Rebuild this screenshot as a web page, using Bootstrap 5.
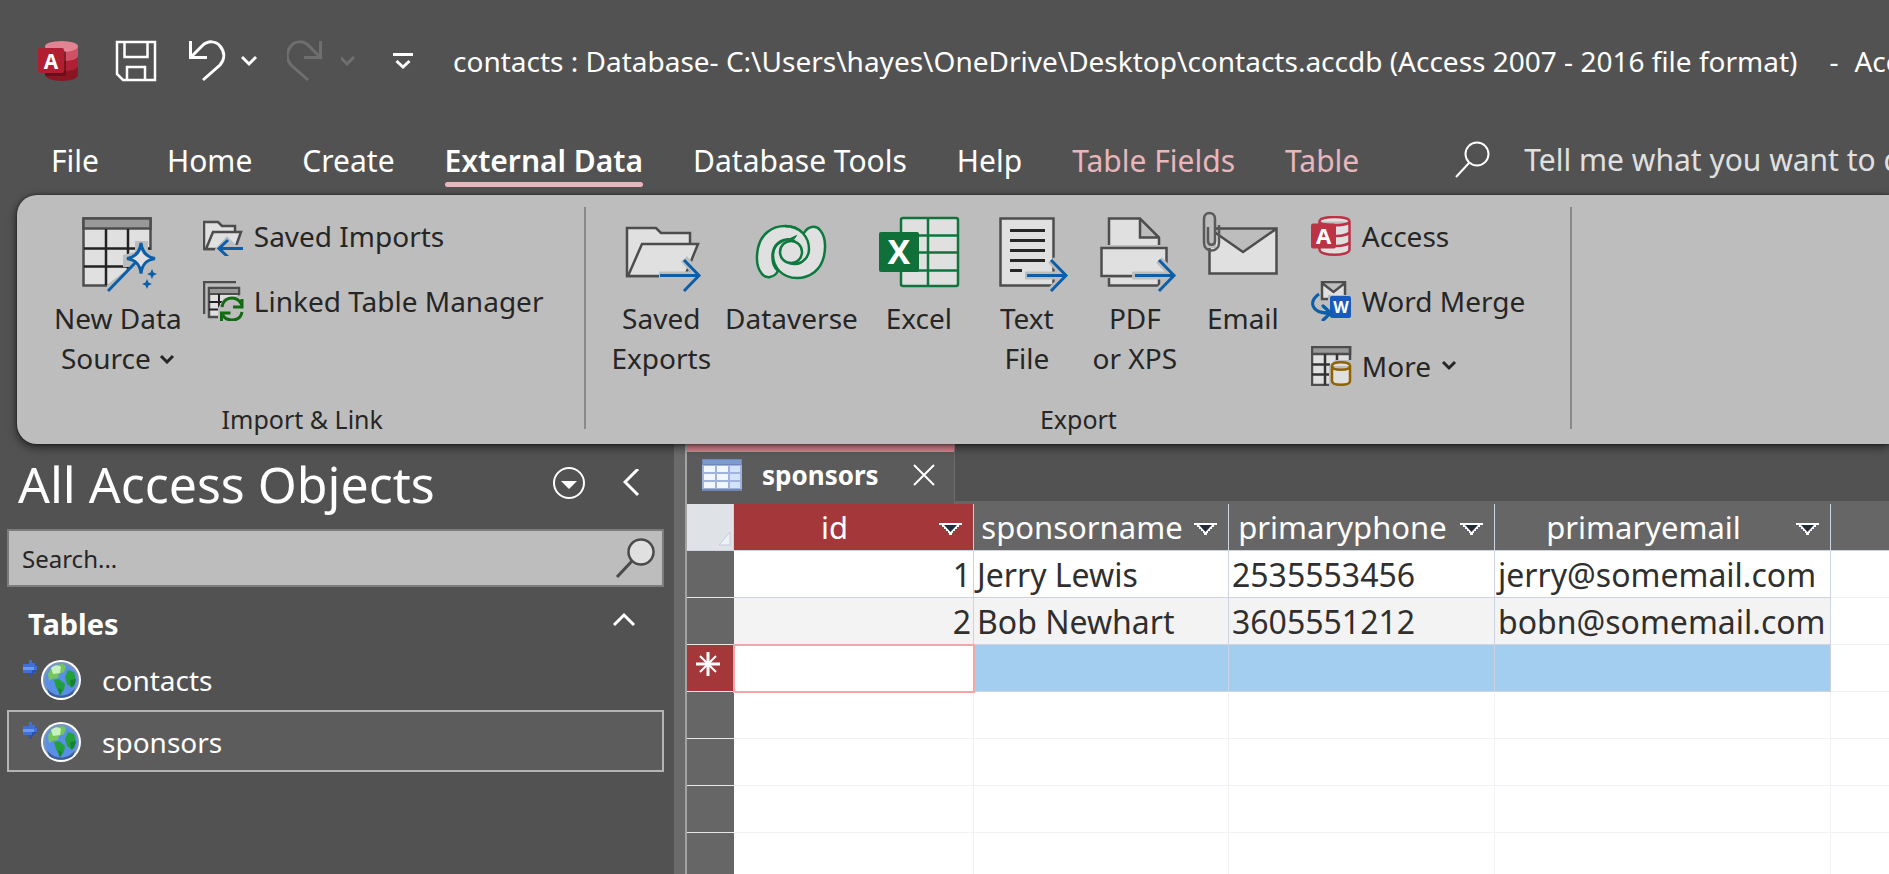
<!DOCTYPE html>
<html lang="en">
<head>
<meta charset="utf-8">
<meta name="viewport" content="width=device-width, initial-scale=1">
<title>contacts : Database - Access</title>
<link href="https://cdn.jsdelivr.net/npm/bootstrap@5.3.0/dist/css/bootstrap.min.css" rel="stylesheet">
<style>
  :root { --chrome: #525252; --panel: #bdbdbd; --ink: #262626; --rose: #e8b6bc; --ruby: #a4373a; --slate: #666; }
  body { font-family: "Noto Sans", "Open Sans", sans-serif; background: var(--chrome); color: #fff; overflow: hidden; }
  svg { display: block; flex: none; }
  button { font: inherit; color: inherit; background: none; border: 0; padding: 0; }

  .titlebar { height: 124px; padding: 0 0 2px 37px; font-size: 28px; }
  .titlebar h1 { font-size: 28px; line-height: 40px; margin: 0 0 0 40px; font-weight: 400; white-space: nowrap; flex: 1; min-width: 0; overflow: hidden; }
  .titlebar .dash { margin: 0 16px 0 32px; }
  .quick { margin-left: 14px; }
  .quick-wide { margin-left: 30px; }
  .quick-far { margin-left: 36px; }

  .tabs { height: 71px; padding-left: 26px; font-size: 30px; line-height: 40px; }
  .tabs a { color: #fff; text-decoration: none; padding: 17px 0 0; margin: 0 25px; height: 63px; border-bottom: 5px solid transparent; }
  .tabs a.first { margin-right: 43px; }
  .tabs a.current { font-weight: 600; position: relative; }
  .tabs a.current::after { content: ""; position: absolute; left: 0; right: 0; bottom: -5px; height: 5px; border-radius: 3px; background: var(--rose); }
  .tabs a.context { color: var(--rose); }
  .tell { padding: 16px 0 0 71px; color: #e0e0e0; min-width: 0; }
  .tell input { background: none; border: 0; padding: 0; margin-left: 33px; color: inherit; min-width: 0; }
  .tell input::placeholder { color: #e0e0e0; opacity: 1; }

  .ribbon { background: var(--panel); color: var(--ink); margin-left: 17px; border-radius: 20px 0 0 20px; font-size: 28px; box-shadow: 0 3px 10px rgba(0,0,0,.6), 0 0 3px rgba(0,0,0,.5); position: relative; z-index: 2; }
  .group { padding: 8px 27px 7px 30px; }
  .group.export { padding: 8px 18px 7px 18px; }
  .group-name { font-size: 25px; line-height: 36px; margin-top: 3px; }
  .rule { width: 2px; background: #8a8a8a; margin: 12px 0 15px; }
  .big { padding: 6px 7px 0; min-width: 108px; line-height: 40px; display: flex; flex-direction: column; align-items: center; }
  .big > svg { margin-bottom: 5px; }
  .stack { margin-left: 14px; padding-right: 14px; }
  .export .stack { padding-right: 27px; }
  .little { height: 65px; display: flex; align-items: center; gap: 10px; }
  .ic { fill: #e0e0e0; stroke: #4d4d4d; stroke-width: 2.5; }
  .blue { fill: none; stroke: #0b5ea8; stroke-width: 3; }
  .halo { fill: none; stroke: var(--panel); stroke-width: 8; }

  .objects { flex: 0 0 674px; padding: 6px 10px 0 7px; }
  .objects h2 { font-size: 50px; line-height: 68px; font-weight: 400; margin: 0 0 0 11px; }
  .find { height: 58px; background: var(--panel); border: 2px solid #7c7c7c; margin-top: 11px; padding: 0 7px 0 13px; }
  .find input { font-size: 24px; background: none; border: 0; padding: 2px 0 0; color: var(--ink); min-width: 0; }
  .find input::placeholder { color: var(--ink); opacity: 1; }
  .section { font-size: 29px; line-height: 40px; font-weight: 700; margin: 17px 0 4px; padding: 0 28px 0 21px; }
  .object { height: 62px; font-size: 28px; color: #fff; text-decoration: none; padding: 2px 14px 0; border: 2px solid transparent; gap: 21px; }
  .object.chosen { background: #5c5c5c; border-color: #b4b4b4; }
  .splitter { width: 13px; background: #6a6a6a; border-right: 2px solid #a3a3a3; }

  .document { background: #fff; }
  .doctabs { background: var(--chrome); border-bottom: 3px solid var(--slate); height: 60px; }
  .doctab { height: 60px; width: 268px; background: #5b5b5b; border-top: 8px solid #dd8591; border-right: 1px solid #6c6c6c; font-size: 26px; font-weight: 700; padding: 0 19px 6px 15px; gap: 20px; }
  .sheet { table-layout: fixed; width: 100%; border-collapse: separate; border-spacing: 0; color: #2f2f2f; font-size: 32px; }
  .sheet th, .sheet td { height: 47px; line-height: 44px; padding: 0 2px; border: 0 solid #f1f1f6; border-width: 0 1px 1px 0; white-space: nowrap; }
  .sheet td { padding: 2px 2px 0 3px; }
  .sheet .last { border-right-width: 0; }
  .sheet thead th { background: var(--slate); color: #fff; font-size: 31px; font-weight: 400; border-color: #cdd3e2; }
  .sheet thead .corner { background: #dfe2e7; }
  .sheet thead .key { background: var(--ruby); }
  .sheet .filled td { border-color: #cdd3e2; }
  .sheet .filled td.last { border-color: #f1f1f6; }
  .sheet tbody th { background: var(--slate); border-color: #e8e8ec; border-right-width: 0; padding: 0 0 0 9px; }
  .sheet .even td:not(.last) { background: #f3f3f3; }
  .sheet .new td:not(.last) { background: #a4cef0; }
  .sheet .new th { background: var(--ruby); }
  .sheet .new td.active { background: #fff; outline: 2px solid #f5a4a8; outline-offset: -1px; position: relative; }
  .head { padding-right: 9px; gap: 6px; }
  .head svg { margin-top: 3px; }
</style>
</head>
<body class="vh-100 d-flex flex-column">

<header class="titlebar d-flex align-items-center flex-shrink-0">
  <svg width="42" height="42" viewBox="36 39 42 42" role="img" aria-label="Access">
    <path d="M44 46v28c0 3 8 6 17 6s16-3 16-6V46z" fill="#8b1523"/>
    <path d="M44 46v19c0 3 8 5 17 5s16-2 16-5V46z" fill="#b02035"/>
    <path d="M44 46v9c0 3 8 5 17 5s16-2 16-5V46z" fill="#cf5163"/>
    <ellipse cx="60.500" cy="45.500" rx="16.500" ry="5.500" fill="#e38494"/>
    <rect x="44" y="50" width="21" height="25" rx="2" fill="#5e0c18" opacity=".7"/>
    <rect x="37" y="47" width="26" height="25" rx="2" fill="#b01e31"/>
    <text x="50" y="67.500" text-anchor="middle" font-size="21" font-weight="700" fill="#fff">A</text>
  </svg>
  <button type="button" aria-label="Save" class="quick-far">
    <svg width="42" height="42" viewBox="116 40 42 42" fill="none" stroke="#fff" stroke-width="2.500"><path d="M118 42h38v38h-32l-6-6z M125.500 42v15h23V42 M128 80V67h18v13"/></svg>
  </button>
  <button type="button" aria-label="Undo" class="quick-wide">
    <svg width="40" height="42" viewBox="189 40 40 42" fill="none" stroke="#fff" stroke-width="3"><path d="M192.500 41v16.500H209 M193 57l11-11c6-6 14-5 18 0 5 6 5 13 0 19l-17 15"/></svg>
  </button>
  <button type="button" aria-label="Undo history" class="quick">
    <svg width="16" height="12" viewBox="0 0 16 12" fill="none" stroke="#fff" stroke-width="3"><path d="M1 2l7 7 7-7"/></svg>
  </button>
  <button type="button" aria-label="Redo" class="quick-wide" disabled>
    <svg width="40" height="42" viewBox="189 40 40 42" fill="none" stroke="#6f6f6f" stroke-width="3"><path transform="matrix(-1 0 0 1 415 0)" d="M192.500 41v16.500H209 M193 57l11-11c6-6 14-5 18 0 5 6 5 13 0 19l-17 15"/></svg>
  </button>
  <button type="button" aria-label="Redo history" class="quick" disabled>
    <svg width="16" height="12" viewBox="2 0 16 12" fill="none" stroke="#6f6f6f" stroke-width="3"><path d="M1 2l7 7 7-7"/></svg>
  </button>
  <button type="button" aria-label="Customize Quick Access Toolbar" class="quick-far">
    <svg width="20" height="18" viewBox="0 0 20 18" fill="none" stroke="#fff" stroke-width="3"><path d="M0 2.500h20 M3.500 9l6.500 6 6.500-6"/></svg>
  </button>
  <h1>contacts : Database- C:\Users\hayes\OneDrive\Desktop\contacts.accdb (Access 2007 - 2016 file format)<span class="dash">-</span>Access</h1>
</header>

<nav class="tabs d-flex flex-shrink-0 text-nowrap">
  <a href="#" class="first">File</a>
  <a href="#">Home</a>
  <a href="#">Create</a>
  <a href="#" class="current">External Data</a>
  <a href="#">Database Tools</a>
  <a href="#">Help</a>
  <a href="#" class="context">Table Fields</a>
  <a href="#" class="context">Table</a>
  <label class="tell d-flex align-items-start flex-fill">
    <svg width="36" height="40" viewBox="0 0 36 40" fill="none" stroke="#fff" stroke-width="2"><circle cx="22" cy="14" r="11.500"/><path d="M14 23L1 37"/></svg>
    <input type="text" class="flex-fill" aria-label="Tell me" placeholder="Tell me what you want to do">
  </label>
</nav>

<section class="ribbon d-flex flex-shrink-0 text-nowrap">
  <div class="group d-flex flex-column">
    <div class="d-flex">
      <button type="button" class="big">
        <svg width="90" height="84" viewBox="73 209 90 84">
          <path class="ic" d="M83.500 218.500h67v67h-67z"/>
          <path fill="#999" stroke="#4d4d4d" stroke-width="2.500" d="M83.500 218.500h67v10h-67z"/>
          <path fill="none" stroke="#222" stroke-width="2.500" d="M106 229v56M128 229v56M84 248.500h66M84 266.500h66"/>
          <path fill="#bdbdbd" d="M107 289v-4l23-18h-7v-12l12-3v-11h13v9h10v40z"/>
          <path class="blue" d="M108 291l28-29"/>
          <path fill="#e0e0e0" stroke="#0b5ea8" stroke-width="3" d="M141 243c1 9 5 14 14 15.500-9 1.500-13 6-14 15-1-9-5-13.500-14-15 9-1.500 13-6.500 14-15.500z"/>
          <path fill="#0b5ea8" d="M152 269l1.500 3.500 3.500 1.500-3.500 1.500-1.500 3.500-1.500-3.500-3.500-1.500 3.500-1.500zM147 279l1.500 3.500 3.500 1.500-3.500 1.500-1.500 3.500-1.500-3.500-3.500-1.500 3.500-1.500z"/>
        </svg>
        <span>New Data</span>
        <span class="d-flex align-items-center gap-2">Source <svg width="16" height="12" viewBox="0 -2 16 12" fill="none" stroke="#262626" stroke-width="3"><path d="M2 2l6 6 6-6"/></svg></span>
      </button>
      <div class="stack d-flex flex-column">
        <button type="button" class="little">
          <svg width="41" height="40" viewBox="203 215 41 40">
            <path class="ic" d="M204 248v-27h14l4 4h13v23z"/><path class="ic" d="M206 248l7-17h28l-6 17z"/>
            <path fill="#bdbdbd" d="M215 256v-8l12-13 9 9h9v12z"/>
            <path class="blue" d="M243 247.500h-23M228 239l-9 8.500 9 8.500"/>
          </svg>Saved Imports
        </button>
        <button type="button" class="little">
          <svg width="41" height="40" viewBox="203 280 41 40">
            <path fill="none" stroke="#4d4d4d" stroke-width="2.500" d="M204 313v-32h32"/>
            <path class="ic" d="M209 287h30v29h-30z"/><path fill="#999" stroke="#4d4d4d" stroke-width="2" d="M209 287h30v6h-30z"/>
            <path fill="none" stroke="#222" stroke-width="2" d="M219 293v23M209 301h20M209 308.500h20"/>
            <path fill="#bdbdbd" d="M218 320v-13l6-10 17-3h3v26z"/>
            <path fill="none" stroke="#126b12" stroke-width="3" d="M222 306c1-7 6-9 10-9 5 0 8 3 10 7M242 298v8h-9M242 311c-1 6-5 8-10 8-5 0-8-2-10-6M221.500 320v-8h9"/>
          </svg>Linked Table Manager
        </button>
      </div>
    </div>
    <div class="group-name text-center mt-auto">Import &amp; Link</div>
  </div>
  <div class="rule"></div>

  <div class="group export d-flex flex-column">
    <div class="d-flex align-items-start">
      <button type="button" class="big">
        <svg width="90" height="84" viewBox="615 209 90 84">
          <path class="ic" d="M626 276v-48h29l5 5h29v43z"/><path class="ic" d="M627 276l14-32h56l-13 32z"/>
          <path class="halo" d="M658 275.500h38M683 259l15 16.500-15 16.500"/><path class="blue" d="M659 275.500h38M683 260l15 15.500-15 15.500"/>
        </svg>
        <span>Saved</span><span>Exports</span>
      </button>
      <button type="button" class="big">
        <svg width="90" height="84" viewBox="0 -1 90 84" fill="#e0e0e0" stroke="#0c7a3f" stroke-width="2.500">
          <path d="M32 61c-4 7-12 8-16 3-5-6-6-16-4-26 3-14 14-22 27-22 15 0 24 11 24 23 0 9-7 15-16 15z"/>
          <path d="M58 23c4-7 12-8 16-3 5 6 6 16 4 26-3 14-14 22-27 22-15 0-24-11-24-23 0-9 7-15 16-15z"/>
          <path d="M39 16c15 0 24 11 24 23 0 9-7 15-16 15-9 1-15-5-15-12 0-7 6-13 14-12 3 0 7-6 5-10z" stroke="none"/>
          <path fill="none" d="M39 16c15 0 24 11 24 23 0 9-7 15-16 15M32 61c-7-6-7-19-2-26 5-6 13-7 19-4M43 53c6 2 12 1 16-4"/>
          <circle cx="45" cy="42" r="11"/>
        </svg>
        <span>Dataverse</span>
      </button>
      <button type="button" class="big">
        <svg width="90" height="84" viewBox="874 209 90 84">
          <rect x="901" y="218" width="57" height="68" rx="2" fill="#e0e0e0" stroke="#10743c" stroke-width="2.500"/>
          <path fill="none" stroke="#10743c" stroke-width="2.500" d="M928 218v68M901 235.500h57M901 252.500h57M901 270.500h57"/>
          <rect x="879" y="232" width="40" height="40" rx="2" fill="#10703a"/>
          <text x="899" y="264" text-anchor="middle" font-size="34" font-weight="700" fill="#fff">X</text>
        </svg>
        <span>Excel</span>
      </button>
      <button type="button" class="big">
        <svg width="90" height="84" viewBox="983 209 90 84">
          <path class="ic" d="M1001.500 218.500h53v67h-53z"/>
          <path fill="none" stroke="#262626" stroke-width="3" d="M1011 230.500h35M1011 240.500h35M1011 250.500h35M1011 260.500h35M1011 270.500h12"/>
          <path class="halo" d="M1026 275.500h40M1052 260l15 15.500-15 15.500"/><path class="blue" d="M1028 275.500h39M1052 260l15 15.500-15 15.500"/>
        </svg>
        <span>Text</span><span>File</span>
      </button>
      <button type="button" class="big">
        <svg width="90" height="84" viewBox="1092 209 90 84">
          <path class="ic" d="M1111 245v-26.500h31l19 19V245M1142 218.500v19h19"/>
          <path class="ic" d="M1111 278v7.500h50V278"/>
          <path class="ic" d="M1103.500 248h65v28h-65z"/>
          <path class="halo" d="M1134 275.500h40M1161 260l15 15.500-15 15.500"/><path class="blue" d="M1137 275.500h38M1161 260l15 15.500-15 15.500"/>
        </svg>
        <span>PDF</span><span>or XPS</span>
      </button>
      <button type="button" class="big">
        <svg width="90" height="84" viewBox="1201 209 90 84">
          <path class="ic" d="M1212.500 228.500h67v45h-67zM1213 229l33 23 33-23"/>
          <path class="halo" d="M1215 210v38"/>
          <path fill="none" stroke="#5a5a5a" stroke-width="2.500" d="M1222 225v18c0 10-15 10-15 0v-24c0-8 11-8 11 0v22c0 5-7 5-7 0v-14"/>
        </svg>
        <span>Email</span>
      </button>
      <div class="stack d-flex flex-column">
        <button type="button" class="little">
          <svg width="41" height="40" viewBox="1313 215 41 40">
            <path fill="#e0e0e0" stroke="#bb3345" stroke-width="2.500" d="M1321.500 220.500c0-6 30-6 30 0v28c0 7-30 7-30 0zM1321.500 220.500c0 5 30 5 30 0M1338 235c8 0 13-2 13-4M1338 245c8 0 13-2 13-4"/>
            <rect x="1313" y="222.500" width="25" height="25" rx="2" fill="#bb3345"/>
            <text x="1325.500" y="243" text-anchor="middle" font-size="22" font-weight="700" fill="#fff">A</text>
          </svg>Access
        </button>
        <button type="button" class="little">
          <svg width="41" height="40" viewBox="1313 280 41 40">
            <path class="ic" d="M1324 281h23v17h-23zM1324 282l11.500 9 11.500-9"/>
            <path class="blue" d="M1321 293c-10 7-9 19 10 19M1324 304l9 8-9 8"/>
            <rect x="1330" y="294" width="24" height="25" fill="#bdbdbd"/>
            <rect x="1332" y="295" width="21" height="22" rx="2" fill="#185abd"/>
            <path class="blue" d="M1326 312h7M1325 305l8 7-8 7"/>
            <text x="1343" y="312" text-anchor="middle" font-size="16" font-weight="700" fill="#fff">W</text>
          </svg>Word Merge
        </button>
        <button type="button" class="little">
          <svg width="41" height="40" viewBox="1313 345 41 40">
            <path class="ic" d="M1314 346h38v38h-38z"/><path fill="#999" stroke="#4d4d4d" stroke-width="2.500" d="M1314 346h38v7h-38z"/>
            <path fill="none" stroke="#333" stroke-width="2.500" d="M1327 353v31M1339 353v8M1314 363.500h18M1314 373.500h18"/>
            <path fill="#bdbdbd" d="M1331 386v-21l6-6h17v27z"/>
            <path fill="#e0e0e0" stroke="#8f6400" stroke-width="2.500" d="M1334 365c0-5 18-5 18 0v15c0 5-18 5-18 0zM1334 365c0 5 18 5 18 0"/>
          </svg>More
          <svg width="16" height="12" viewBox="0 0 16 12" fill="none" stroke="#262626" stroke-width="3"><path d="M2 2l6 6 6-6"/></svg>
        </button>
      </div>
    </div>
    <div class="group-name text-center">Export</div>
  </div>
  <div class="rule"></div>
</section>

<main class="d-flex flex-fill overflow-hidden">
  <aside class="objects">
    <div class="d-flex align-items-center">
      <h2 class="me-auto text-nowrap">All Access Objects</h2>
      <button type="button" aria-label="Filter objects" style="margin-right:37px">
        <svg width="34" height="34" viewBox="0 2 34 34" fill="none" stroke="#fff" stroke-width="2"><circle cx="17" cy="18" r="15"/><path d="M9 16h16l-8 8z" fill="#fff" stroke="none"/></svg>
      </button>
      <button type="button" aria-label="Collapse pane" style="margin-right:24px">
        <svg width="17" height="30" viewBox="0 2 17 30" fill="none" stroke="#fff" stroke-width="3"><path d="M15 2L2 15l13 13"/></svg>
      </button>
    </div>
    <label class="find d-flex align-items-center">
      <input type="search" class="flex-fill" aria-label="Search objects" placeholder="Search...">
      <svg width="40" height="42" viewBox="0 0 40 42" fill="#e0e0e0" stroke="#4a4a4a" stroke-width="2.500"><circle cx="26" cy="15" r="12.500"/><path d="M17 24L2 40" stroke-width="3"/></svg>
    </label>
    <div class="section d-flex justify-content-between align-items-center">Tables
      <button type="button" aria-label="Collapse Tables"><svg width="24" height="28" viewBox="0 2 24 28" fill="none" stroke="#fff" stroke-width="3"><path d="M2 17L12 7l10 10"/></svg></button>
    </div>
    <svg width="0" height="0" class="position-absolute" aria-hidden="true">
      <symbol id="linked" viewBox="23 660 58 40">
        <path fill="#3f6fd8" d="M29 660h3v3h3v3h2v4h-2v3h-3v4h-3v-4h-6v-9h6z"/><path fill="#6c97ee" d="M23 667h11v3H23z"/><path fill="#2a50b0" d="M29 673h3v4h-3zM32 670h4v2h-2v2h-2z"/>
        <circle cx="61" cy="680" r="20" fill="#fff"/><circle cx="61" cy="680" r="18" fill="#7d94bd"/><circle cx="61" cy="680" r="16" fill="#5a8fe8"/>
        <path fill="#3c5d9e" d="M47 688c7 10 21 10 28 0l-2 6c-7 5-17 5-24 0z"/>
        <path fill="#74c65a" d="M48 674c2-6 8-10 15-10l3 2-2 6-5 2-1 4-6 1-3 2z"/><path fill="#c5f2bd" d="M51 668c4-4 8-3 10-1l-1 6-7 1z"/>
        <path fill="#22a03c" d="M54 680l5-1 6 5-1 6-4 5-4-8zM68 670l6 2 2 9-4 7-5-4-2-7z"/>
        <path fill="#178032" d="M70 680l6-1-2 7-3 1zM58 688l4 2-2 6z"/>
      </symbol>
    </svg>
    <a href="#" class="object d-flex align-items-center"><svg width="58" height="40"><use href="#linked"/></svg>contacts</a>
    <a href="#" class="object chosen d-flex align-items-center"><svg width="58" height="40"><use href="#linked"/></svg>sponsors</a>
  </aside>
  <div class="splitter flex-shrink-0"></div>

  <section class="document flex-fill overflow-hidden">
    <div class="doctabs">
      <div class="doctab d-flex align-items-center">
        <svg width="40" height="32" viewBox="0 0 40 32">
          <path fill="#6f88b8" d="M0 0h40v32H0z"/><path fill="#7e9bd0" d="M1 1h38v4H1z"/><path fill="#9fb3dc" d="M0 6h40v24H0z"/>
          <path fill="#f2f6ff" d="M2 7h11v6H2zM15 7h11v6H15zM2 15h11v6H2zM15 15h11v6H15zM2 23h11v6H2zM15 23h11v6H15z"/><path fill="#d3e2fb" d="M28 7h10v6H28zM28 15h10v6H28zM28 23h10v6H28z"/>
        </svg>
        <span>sponsors</span>
        <button type="button" class="ms-auto" aria-label="Close sponsors"><svg width="22" height="22" viewBox="0 0 22 22" fill="none" stroke="#fff" stroke-width="2"><path d="M1 1l20 20M21 1L1 21"/></svg></button>
      </div>
    </div>
    <svg width="0" height="0" class="position-absolute" aria-hidden="true">
      <symbol id="drop" viewBox="0 0 23 12"><path fill="#fff" d="M0 0h23v2h-3v2h-2v2h-2v2h-2v2h-1v2h-3v-2H9V8H7V6H5V4H3V2H0z"/><path fill="#242c3a" d="M5 2h13l-6.500 7z"/></symbol>
    </svg>
    <table class="sheet">
      <colgroup><col style="width:47px"><col style="width:240px"><col style="width:255px"><col style="width:266px"><col style="width:336px"><col></colgroup>
      <thead>
        <tr>
          <th class="corner align-bottom"><svg width="12" height="14" viewBox="0 0 12 14" class="ms-auto mb-1"><path d="M0 13L11 0v13z" fill="#eef1f5" stroke="#c3cad8"/></svg></th>
          <th class="key"><div class="head d-flex align-items-center"><span class="flex-fill text-center">id</span><button type="button" aria-label="Filter id"><svg width="23" height="12"><use href="#drop"/></svg></button></div></th>
          <th><div class="head d-flex align-items-center"><span class="flex-fill text-center">sponsorname</span><button type="button" aria-label="Filter sponsorname"><svg width="23" height="12"><use href="#drop"/></svg></button></div></th>
          <th><div class="head d-flex align-items-center"><span class="flex-fill text-center">primaryphone</span><button type="button" aria-label="Filter primaryphone"><svg width="23" height="12"><use href="#drop"/></svg></button></div></th>
          <th><div class="head d-flex align-items-center"><span class="flex-fill text-center">primaryemail</span><button type="button" aria-label="Filter primaryemail"><svg width="23" height="12"><use href="#drop"/></svg></button></div></th>
          <th class="last"></th>
        </tr>
      </thead>
      <tbody>
        <tr class="filled"><th></th><td class="text-end">1</td><td>Jerry Lewis</td><td>2535553456</td><td>jerry@somemail.com</td><td class="last"></td></tr>
        <tr class="filled even"><th></th><td class="text-end">2</td><td>Bob Newhart</td><td>3605551212</td><td>bobn@somemail.com</td><td class="last"></td></tr>
        <tr class="filled new"><th><svg width="24" height="24" viewBox="0 0 24 24" class="mb-2" fill="none" stroke="#fff"><path stroke-width="3" d="M12 0v24M0 12h24"/><path stroke-width="2" d="M4 4l16 16M20 4L4 20"/></svg></th><td class="active"></td><td></td><td></td><td></td><td class="last"></td></tr>
        <tr><th></th><td></td><td></td><td></td><td></td><td class="last"></td></tr>
        <tr><th></th><td></td><td></td><td></td><td></td><td class="last"></td></tr>
        <tr><th></th><td></td><td></td><td></td><td></td><td class="last"></td></tr>
        <tr><th></th><td></td><td></td><td></td><td></td><td class="last"></td></tr>
      </tbody>
    </table>
  </section>
</main>

<script src="https://cdn.jsdelivr.net/npm/bootstrap@5.3.0/dist/js/bootstrap.bundle.min.js"></script>
</body>
</html>
